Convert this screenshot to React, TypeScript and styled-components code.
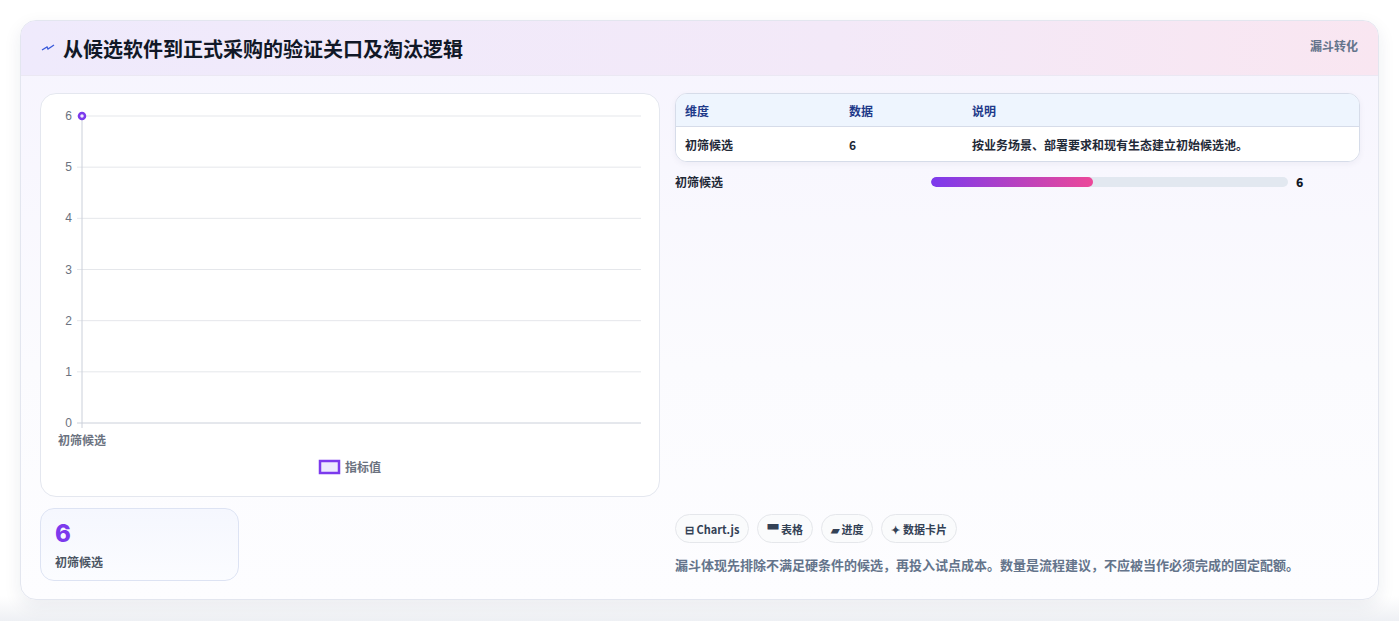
import React from "react";
import styled, { createGlobalStyle } from "styled-components";

const Global = createGlobalStyle`
  html, body { margin: 0; padding: 0; background: #ffffff; }
  body { font-family: "Noto Sans CJK SC", "Noto Sans", sans-serif; }
  * { box-sizing: border-box; }
`;

const Page = styled.div`
  padding: 20px 20px 21px 20px;
  width: 1399px;
  height: 621px;
  background: linear-gradient(180deg, #ffffff 0%, #ffffff 96%, #eef0f4 100%);
`;

const Card = styled.div`
  width: 1359px;
  height: 580px;
  border: 1px solid #e3e6ef;
  border-radius: 16px;
  overflow: hidden;
  background: linear-gradient(180deg, #f6f4fe 0%, #fbfbfe 60%, #fdfdff 100%);
  box-shadow: 0 6px 18px rgba(30, 40, 80, 0.08);
  display: flex;
  flex-direction: column;
`;

const Header = styled.div`
  height: 55px;
  flex: none;
  display: flex;
  align-items: center;
  justify-content: space-between;
  padding: 0 20px 0 20px;
  background: linear-gradient(90deg, #efeafc 0%, #f3e9f8 60%, #f9e6f1 100%);
  border-bottom: 1px solid #ebe8f3;
`;

const Title = styled.h2`
  margin: 0;
  display: flex;
  align-items: center;
  gap: 8px;
  font-size: 20px;
  font-weight: 700;
  color: #111827;
`;

const Tag = styled.span`
  align-self: flex-start;
  margin-top: 16px;
  font-size: 12px;
  font-weight: 700;
  color: #64748b;
`;

const Body = styled.div`
  flex: 1;
  display: grid;
  grid-template-columns: 620px 685px;
  gap: 15px;
  padding: 17px 18px 18px 19px;
`;

const LeftCol = styled.div`
  display: flex;
  flex-direction: column;
  gap: 11px;
`;

const ChartBox = styled.div`
  height: 404px;
  background: #ffffff;
  border: 1px solid #e4e7ef;
  border-radius: 16px;
`;

const StatCard = styled.div`
  width: 199px;
  height: 73px;
  border: 1px solid #dde3f3;
  border-radius: 14px;
  background: linear-gradient(180deg, #f5f7fe, #fbfcff);
  padding: 10px 14px;
`;

const StatValue = styled.div`
  font-family: "Inter", sans-serif;
  font-size: 24px;
  font-weight: 800;
  color: #7c3aed;
  line-height: 30px;
`;

const StatLabel = styled.div`
  font-size: 12px;
  font-weight: 600;
  color: #4b5563;
  margin-top: 4px;
`;

const RightCol = styled.div`
  display: flex;
  flex-direction: column;
`;

const Table = styled.div`
  border: 1px solid #d6dce9;
  border-radius: 12px;
  overflow: hidden;
  background: #ffffff;
  box-shadow: 0 2px 6px rgba(30, 40, 80, 0.05);
`;

const Row = styled.div<{ $head?: boolean }>`
  display: grid;
  grid-template-columns: 164px 123px 1fr;
  height: ${(p) => (p.$head ? "33px" : "34px")};
  align-items: center;
  padding-left: 9px;
  font-size: 12px;
  font-weight: 600;
  color: ${(p) => (p.$head ? "#1e3a8a" : "#1f2937")};
  background: ${(p) => (p.$head ? "#eef5fe" : "#ffffff")};
  border-bottom: ${(p) => (p.$head ? "1px solid #d6dce9" : "none")};
`;

const BarRow = styled.div`
  display: grid;
  grid-template-columns: 256px 357px 1fr;
  align-items: center;
  margin-top: 11px;
  gap: 0;
  font-size: 12px;
  font-weight: 600;
  color: #1f2937;
`;

const Track = styled.div`
  height: 10px;
  border-radius: 5px;
  background: #e2e8f0;
  overflow: hidden;
`;

const Fill = styled.div`
  height: 100%;
  border-radius: 5px;
  background: linear-gradient(90deg, #7c3aed, #ec4899);
`;

const BarValue = styled.span`
  padding-left: 8px;
  font-weight: 800;
  color: #111827;
`;

const Spacer = styled.div`
  flex: 1;
`;

const Chips = styled.div`
  display: flex;
  gap: 8px;
`;

const Chip = styled.span`
  height: 29px;
  padding: 0 9px;
  border: 1px solid #e5e7eb;
  border-radius: 15px;
  background: #fafbfc;
  display: inline-flex;
  align-items: center;
  gap: 4px;
  font-size: 11px;
  font-weight: 700;
  color: #334155;
`;

const Note = styled.p`
  margin: 12px 0 7px;
  font-size: 13px;
  font-weight: 600;
  color: #64748b;
`;

const yTicks = [6, 5, 4, 3, 2, 1, 0];

function Chart() {
  const top = 22, bottom = 329, left = 41, right = 600;
  const step = (bottom - top) / 6;
  return (
    <svg width="620" height="402" viewBox="0 0 620 402">
      {yTicks.map((t, i) => {
        const y = top + i * step;
        return (
          <g key={t}>
            <line x1={left - 5} x2={right} y1={y} y2={y} stroke={t === 0 ? "#cbd0da" : "#e5e7eb"} />
            <text x={left - 10} y={y + 4} textAnchor="end" fontSize="12" fill="#6b7280" fontFamily="Liberation Sans, sans-serif">{t}</text>
          </g>
        );
      })}
      <line x1={left} x2={left} y1={top} y2={bottom + 5} stroke="#cbd0da" />
      <text x={41} y={351} textAnchor="middle" fontSize="12" fill="#6b7280" fontWeight="600" fontFamily="Noto Sans CJK SC, sans-serif">初筛候选</text>
      <circle cx={left} cy={top} r={3} fill="#ede9fe" stroke="#7c3aed" strokeWidth={2.5} />
      <rect x={279} y={367} width={19} height={12} fill="#ede9fe" stroke="#7c3aed" strokeWidth={2.5} />
      <text x={304} y={378} fontSize="12" fill="#6b7280" fontWeight="600" fontFamily="Noto Sans CJK SC, sans-serif">指标值</text>
    </svg>
  );
}

export default function App() {
  return (
    <>
      <Global />
      <Page>
        <Card>
          <Header>
            <Title>
              <svg width="14" height="10" viewBox="0 0 14 10">
                <path d="M1 7 L6 4 L7 6 L13 2" stroke="#3b5bdb" strokeWidth="1.4" fill="none" />
              </svg>
              从候选软件到正式采购的验证关口及淘汰逻辑
            </Title>
            <Tag>漏斗转化</Tag>
          </Header>
          <Body>
            <LeftCol>
              <ChartBox>
                <Chart />
              </ChartBox>
              <StatCard>
                <StatValue>6</StatValue>
                <StatLabel>初筛候选</StatLabel>
              </StatCard>
            </LeftCol>
            <RightCol>
              <Table>
                <Row $head>
                  <span>维度</span>
                  <span>数据</span>
                  <span>说明</span>
                </Row>
                <Row>
                  <span>初筛候选</span>
                  <span>6</span>
                  <span>按业务场景、部署要求和现有生态建立初始候选池。</span>
                </Row>
              </Table>
              <BarRow>
                <span>初筛候选</span>
                <Track>
                  <Fill style={{ width: `${(6 / 13.2) * 100}%` }} />
                </Track>
                <BarValue>6</BarValue>
              </BarRow>
              <Spacer />
              <Chips>
                <Chip>⊟ Chart.js</Chip>
                <Chip>▀ 表格</Chip>
                <Chip>▰ 进度</Chip>
                <Chip>✦ 数据卡片</Chip>
              </Chips>
              <Note>漏斗体现先排除不满足硬条件的候选，再投入试点成本。数量是流程建议，不应被当作必须完成的固定配额。</Note>
            </RightCol>
          </Body>
        </Card>
      </Page>
    </>
  );
}
